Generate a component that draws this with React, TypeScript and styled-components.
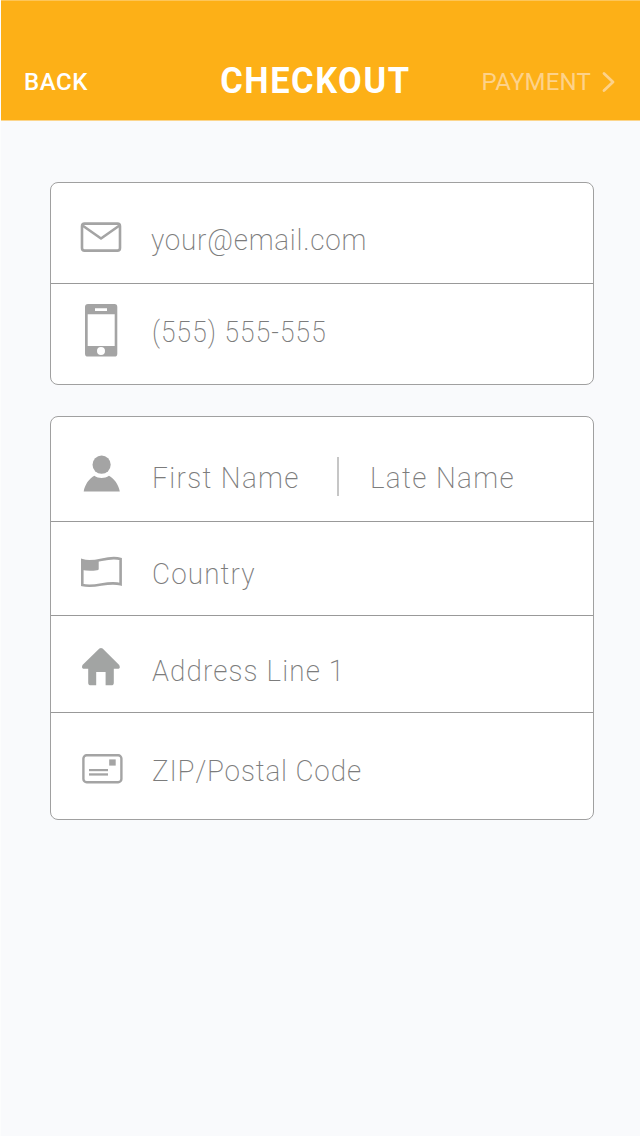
import React from "react";
import styled, { createGlobalStyle } from "styled-components";

const GlobalStyle = createGlobalStyle`
  * { box-sizing: border-box; }
  body { margin: 0; background: #f9fafc; }
`;

const Screen = styled.div`
  width: 640px;
  height: 1136px;
  overflow: hidden;
  background: #f9fafc;
  border-left: 1px solid #fcfdfd;
  font-family: Roboto, "Liberation Sans", sans-serif;
`;

const Header = styled.header`
  display: flex;
  justify-content: space-between;
  height: 121px;
  margin-left: -1px;
  padding: 61px 25px 0 23px;
  background: #fdb017;
  border-top: 1px solid #fdc65a;
  border-left: 1px solid #fdc65a;
  border-bottom: 1px solid #fcd58b;
  color: #fff;
`;

const NavLabel = styled.span<{ $spacing: number; $width: number; $faded?: boolean }>`
  display: flex;
  width: ${(p) => p.$width}px;
  justify-content: ${(p) => (p.$faded ? "flex-end" : "flex-start")};
  font-size: 24px;
  font-weight: ${(p) => (p.$faded ? 400 : 500)};
  line-height: 40px;
  letter-spacing: ${(p) => p.$spacing}px;
  color: ${(p) => (p.$faded ? "#fdd28a" : "#fff")};
`;

const Title = styled.h1`
  margin: 0;
  font-size: 37px;
  font-weight: 700;
  line-height: 38px;
  letter-spacing: 1.7px;
  white-space: nowrap;
  transform: scaleX(0.93);
`;

const Chevron = styled.svg`
  flex: none;
  width: 14px;
  height: 24px;
  margin: 8px 0 0 10px;
`;

const Form = styled.main`
  display: flex;
  flex-direction: column;
  gap: 31px;
  padding: 61px 46px 0 49px;
`;

const Card = styled.section`
  border: 1px solid #a0a0a0;
  border-radius: 8px;
  background: #fff;
`;

const Row = styled.div<{ $height: number }>`
  display: flex;
  align-items: flex-start;
  height: ${(p) => p.$height}px;
  padding-left: 29px;
  & + & {
    border-top: 1px solid #999;
  }
`;

const Icon = styled.svg<{ $top: number }>`
  flex: none;
  width: 44px;
  height: 54px;
  margin: ${(p) => p.$top}px 27px 0 0;
  fill: #a4a4a4;
`;

const Field = styled.span<{
  $top: number;
  $spacing: number;
  $width?: number;
  $scale?: number;
  $indent?: number;
}>`
  flex: none;
  width: ${(p) => (p.$width ? `${p.$width}px` : "auto")};
  margin-top: ${(p) => p.$top}px;
  padding-left: ${(p) => p.$indent ?? 0}px;
  font-size: 30px;
  font-weight: 200;
  line-height: 36px;
  letter-spacing: ${(p) => p.$spacing}px;
  white-space: nowrap;
  color: #7c7c7c;
  transform: scaleX(${(p) => p.$scale ?? 0.93});
  transform-origin: left center;
`;

const Divider = styled.div`
  width: 2px;
  height: 39px;
  margin: 40px 31px 0 0;
  background: #c6c6c6;
`;

export default function App() {
  return (
    <>
      <GlobalStyle />
      <Screen>
        <Header>
          <NavLabel $spacing={0.6} $width={142}>BACK</NavLabel>
          <Title>CHECKOUT</Title>
          <NavLabel $spacing={0.2} $width={150} $faded>
            PAYMENT
            <Chevron viewBox="0 0 14 24" fill="none" stroke="#fdd28a" strokeWidth="2.8" strokeLinecap="round" strokeLinejoin="round">
              <path d="M3 3.5 L12 12 L3 20.5" />
            </Chevron>
          </NavLabel>
        </Header>
        <Form>
          <Card>
            <Row $height={100}>
              <Icon $top={29} viewBox="80 212 44 54">
                <g fill="none" stroke="#a4a4a4" strokeWidth="2.6" strokeLinejoin="round">
                  <rect x="82" y="223.6" width="38" height="27" rx="2.6" />
                  <path d="M82.5 225.5 L101 238.5 L119.5 225.5" />
                </g>
              </Icon>
              <Field $top={39} $spacing={0.8}>your@email.com</Field>
            </Row>
            <Row $height={101}>
              <Icon $top={19} viewBox="80 303 44 54">
                <path
                  fillRule="evenodd"
                  d="M88 304 H114.5 Q117.3 304 117.3 307 V353.7 Q117.3 356.6 114.5 356.6 H88 Q85 356.6 85 353.7 V307 Q85 304 88 304 Z M87.7 314.3 V346 H114.7 V314.3 Z M95 308.2 V311 H107 V308.2 Z M97 351 A4 4 0 1 0 105 351 A4 4 0 1 0 97 351 Z"
                />
              </Icon>
              <Field $top={30} $spacing={1.2} $scale={0.88} $indent={1}>(555) 555-555</Field>
            </Row>
          </Card>
          <Card>
            <Row $height={104}>
              <Icon $top={29} viewBox="80 446 44 54">
                <circle cx="101.6" cy="464.7" r="9.1" />
                <path d="M83.7 491.4 C85 484.5 89 478.7 94.3 475.8 C98.5 478.8 104.7 478.8 109 475.8 C114.3 478.7 118.5 484.5 119.8 491.4 Z" />
              </Icon>
              <Field $top={43} $spacing={1.45} $width={186} $indent={1}>First Name</Field>
              <Divider />
              <Field $top={43} $spacing={1.45}>Late Name</Field>
            </Row>
            <Row $height={94}>
              <Icon $top={24} viewBox="80 546 44 54">
                <path
                  d="M82.3 560.3 C96 564.5 107 555 120.6 559 V584.3 C107 580.5 96 588.5 82.3 585 Z"
                  fill="none"
                  stroke="#a4a4a4"
                  strokeWidth="2.6"
                />
                <path d="M82 560 Q90 562.5 98.7 560.5 V569 Q98.7 570.3 97 570.3 Q89 571.5 82 570 Z" />
              </Icon>
              <Field $top={34} $spacing={1.2} $indent={1}>Country</Field>
            </Row>
            <Row $height={97}>
              <Icon $top={24} viewBox="80 640 44 54">
                <path d="M99.4 648.6 Q101 647.4 102.6 648.6 L119.2 665.1 Q120.7 668.3 118.6 668.8 H113.8 V682.7 Q113.8 685.3 111.2 685.3 H105.6 V672 H96.2 V685.3 H91 Q88.2 685.3 88.2 682.7 V668.8 H83.3 Q81.2 668.2 82.5 665.1 Z" fill="#a2a4a3" />
              </Icon>
              <Field $top={37} $spacing={1.2} $indent={1}>Address Line 1</Field>
            </Row>
            <Row $height={107}>
              <Icon $top={29} viewBox="80 742 44 54">
                <rect x="83.4" y="755.3" width="38" height="26.9" rx="3.2" fill="none" stroke="#a4a4a4" strokeWidth="2.4" />
                <rect x="109.2" y="759.4" width="6.5" height="6.2" />
                <rect x="89" y="769" width="19" height="2.2" />
                <rect x="89" y="773.3" width="19" height="2.3" />
              </Icon>
              <Field $top={40} $spacing={0.9} $indent={1}>ZIP/Postal Code</Field>
            </Row>
          </Card>
        </Form>
      </Screen>
    </>
  );
}
